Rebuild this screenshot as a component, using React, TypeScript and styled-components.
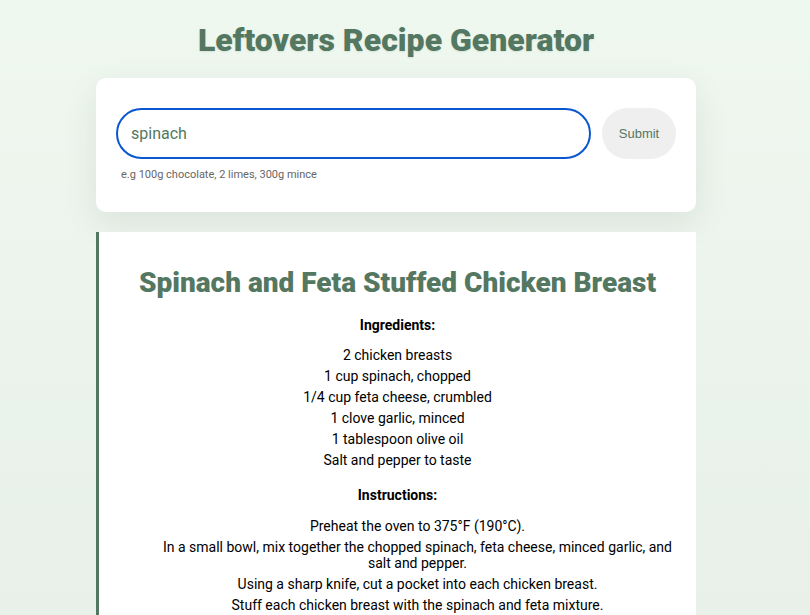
import React from "react";
import styled, { createGlobalStyle } from "styled-components";

const GREEN = "#537761";

const Global = createGlobalStyle`
  html, body {
    margin: 0;
    padding: 0;
    overflow: hidden;
  }
  body {
    font-family: Roboto, "Liberation Sans", Arial, sans-serif;
    background: linear-gradient(180deg, #eff8ef 0%, #eaf2ec 60%, #e9f0ea 100%);
    min-height: 615px;
  }
`;

const Page = styled.main`
  width: 792px;
  display: flex;
  flex-direction: column;
  align-items: center;
`;

const Title = styled.h1`
  margin: 21px 0 0;
  height: 38px;
  line-height: 38px;
  font-size: 32px;
  font-weight: 900;
  color: ${GREEN};
  text-shadow: 0 1px 2px rgba(83, 119, 97, 0.15);
  text-align: center;
`;

const FormCard = styled.form`
  margin-top: 19px;
  width: 600px;
  box-sizing: border-box;
  padding: 30px 20px 30px;
  background: #fff;
  border-radius: 10px;
  box-shadow: 0 12px 34px rgba(40, 60, 45, 0.09);
  display: flex;
  flex-direction: column;
`;

const Row = styled.div`
  display: flex;
  align-items: stretch;
  gap: 11px;
`;

const Input = styled.input`
  flex: 1;
  height: 51px;
  box-sizing: border-box;
  border: 2px solid #0b57d0;
  border-radius: 26px;
  padding: 0 13px;
  font-family: Roboto, "Liberation Sans", sans-serif;
  font-size: 16px;
  color: ${GREEN};
  background: #fff;
  outline: none;
`;

const SubmitButton = styled.button`
  width: 74px;
  height: 51px;
  border: none;
  border-radius: 26px;
  background: #efefef;
  color: ${GREEN};
  font-family: "Liberation Sans", Arial, sans-serif;
  font-size: 13px;
  cursor: pointer;
`;

const Hint = styled.div`
  margin-top: 9px;
  padding-left: 5px;
  font-size: 11px;
  line-height: 14px;
  color: #666;
`;

const RecipeCard = styled.article`
  margin-top: 20px;
  width: 600px;
  box-sizing: border-box;
  background: #fff;
  border-left: 3px solid ${GREEN};
  padding: 20px 20px 30px;
  text-align: center;
`;

const RecipeTitle = styled.h2`
  margin: 15px 0 0;
  font-size: 28px;
  line-height: 32px;
  font-weight: 900;
  color: ${GREEN};
`;

const SectionHeading = styled.h3<{ $top: number }>`
  margin: ${(p) => p.$top}px 0 0;
  font-size: 14px;
  line-height: 16px;
  font-weight: 700;
  color: #000;
`;

const List = styled.ul<{ $indent: number; $top: number }>`
  list-style: none;
  margin: ${(p) => p.$top}px 0 0;
  padding: 0 0 0 ${(p) => p.$indent}px;
`;

const Item = styled.li`
  font-size: 14px;
  line-height: 16px;
  color: #000;
  margin-bottom: 5px;
`;

const ingredients = [
  "2 chicken breasts",
  "1 cup spinach, chopped",
  "1/4 cup feta cheese, crumbled",
  "1 clove garlic, minced",
  "1 tablespoon olive oil",
  "Salt and pepper to taste",
];

const instructions = [
  "Preheat the oven to 375°F (190°C).",
  "In a small bowl, mix together the chopped spinach, feta cheese, minced garlic, and salt and pepper.",
  "Using a sharp knife, cut a pocket into each chicken breast.",
  "Stuff each chicken breast with the spinach and feta mixture.",
  "Heat the olive oil in an oven-safe skillet over medium-high heat.",
  "Sear the chicken breasts for 2-3 minutes on each side, until golden brown.",
  "Transfer the skillet to the oven and bake for 20-25 minutes, until cooked through.",
];

export default function App() {
  return (
    <>
      <Global />
      <Page>
        <Title>Leftovers Recipe Generator</Title>
        <FormCard onSubmit={(e) => e.preventDefault()}>
          <Row>
            <Input defaultValue="spinach" />
            <SubmitButton type="submit">Submit</SubmitButton>
          </Row>
          <Hint>e.g 100g chocolate, 2 limes, 300g mince</Hint>
        </FormCard>
        <RecipeCard>
          <RecipeTitle>Spinach and Feta Stuffed Chicken Breast</RecipeTitle>
          <SectionHeading $top={18}>Ingredients:</SectionHeading>
          <List $indent={0} $top={14}>
            {ingredients.map((i) => (
              <Item key={i}>{i}</Item>
            ))}
          </List>
          <SectionHeading $top={19}>Instructions:</SectionHeading>
          <List $indent={40} $top={15}>
            {instructions.map((i) => (
              <Item key={i}>{i}</Item>
            ))}
          </List>
        </RecipeCard>
      </Page>
    </>
  );
}
